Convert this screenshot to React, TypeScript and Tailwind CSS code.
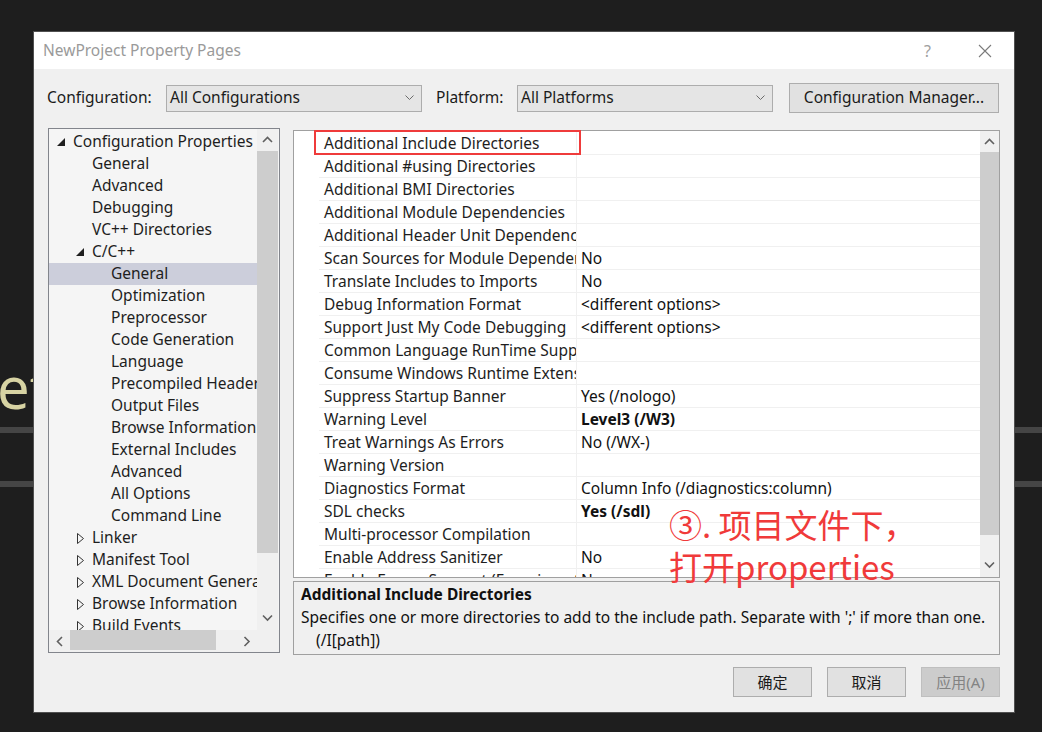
import React from 'react';

type TreeItem = { label: string; level: 0 | 1 | 2; arrow?: 'open' | 'closed'; selected?: boolean };

const tree: TreeItem[] = [
  { label: 'Configuration Properties', level: 0, arrow: 'open' },
  { label: 'General', level: 1 },
  { label: 'Advanced', level: 1 },
  { label: 'Debugging', level: 1 },
  { label: 'VC++ Directories', level: 1 },
  { label: 'C/C++', level: 1, arrow: 'open' },
  { label: 'General', level: 2, selected: true },
  { label: 'Optimization', level: 2 },
  { label: 'Preprocessor', level: 2 },
  { label: 'Code Generation', level: 2 },
  { label: 'Language', level: 2 },
  { label: 'Precompiled Headers', level: 2 },
  { label: 'Output Files', level: 2 },
  { label: 'Browse Information', level: 2 },
  { label: 'External Includes', level: 2 },
  { label: 'Advanced', level: 2 },
  { label: 'All Options', level: 2 },
  { label: 'Command Line', level: 2 },
  { label: 'Linker', level: 1, arrow: 'closed' },
  { label: 'Manifest Tool', level: 1, arrow: 'closed' },
  { label: 'XML Document Generator', level: 1, arrow: 'closed' },
  { label: 'Browse Information', level: 1, arrow: 'closed' },
  { label: 'Build Events', level: 1, arrow: 'closed' },
];

const indent = { 0: 'pl-[8px]', 1: 'pl-[27px]', 2: 'pl-[46px]' };

const props: { name: string; value?: string; bold?: boolean }[] = [
  { name: 'Additional Include Directories' },
  { name: 'Additional #using Directories' },
  { name: 'Additional BMI Directories' },
  { name: 'Additional Module Dependencies' },
  { name: 'Additional Header Unit Dependencies' },
  { name: 'Scan Sources for Module Dependencies', value: 'No' },
  { name: 'Translate Includes to Imports', value: 'No' },
  { name: 'Debug Information Format', value: '<different options>' },
  { name: 'Support Just My Code Debugging', value: '<different options>' },
  { name: 'Common Language RunTime Support' },
  { name: 'Consume Windows Runtime Extension' },
  { name: 'Suppress Startup Banner', value: 'Yes (/nologo)' },
  { name: 'Warning Level', value: 'Level3 (/W3)', bold: true },
  { name: 'Treat Warnings As Errors', value: 'No (/WX-)' },
  { name: 'Warning Version' },
  { name: 'Diagnostics Format', value: 'Column Info (/diagnostics:column)' },
  { name: 'SDL checks', value: 'Yes (/sdl)', bold: true },
  { name: 'Multi-processor Compilation' },
  { name: 'Enable Address Sanitizer', value: 'No' },
  { name: 'Enable Fuzzer Support (Experimental)', value: 'No' },
];

function Chevron({ dir }: { dir: 'up' | 'down' | 'left' | 'right' }) {
  const pts = {
    up: '1,6 5.5,1.5 10,6',
    down: '1,1.5 5.5,6 10,1.5',
    left: '6,1 1.5,5.5 6,10',
    right: '1.5,1 6,5.5 1.5,10',
  }[dir];
  const size = dir === 'up' || dir === 'down' ? { w: 11, h: 8 } : { w: 8, h: 11 };
  return (
    <svg width={size.w} height={size.h} viewBox={`0 0 ${size.w} ${size.h}`}>
      <polyline points={pts} fill="none" stroke="#606060" strokeWidth="1.6" />
    </svg>
  );
}

function Combo({ text }: { text: string }) {
  return (
    <div className="flex h-[27px] w-[256px] items-center justify-between border border-[#adadad] bg-[#e5e5e5] pl-[3px] pr-[7px]">
      <span className="text-[15.5px] text-[#1b1b1b]">{text}</span>
      <svg width="9" height="6" viewBox="0 0 9 6">
        <polyline points="0.5,0.5 4.5,4.5 8.5,0.5" fill="none" stroke="#6b6b6b" strokeWidth="1" />
      </svg>
    </div>
  );
}

function Tree() {
  return (
    <div className="flex h-[525px] w-[232px] flex-col border border-[#82858c] bg-[#f5f5f5]">
      <div className="flex h-[501px]">
        <div className="w-[208px] overflow-hidden pt-[2px]">
          {tree.map((t, i) => (
            <div
              key={i}
              className={`flex h-[22px] items-center whitespace-nowrap ${indent[t.level]} ${t.selected ? 'bg-[#cccedb]' : ''}`}
            >
              <span className="flex w-[16px] shrink-0 items-center">
                {t.arrow === 'open' && (
                  <svg width="8" height="8" viewBox="0 0 8 8">
                    <polygon points="8,0 8,8 0,8" fill="#1e1e1e" />
                  </svg>
                )}
                {t.arrow === 'closed' && (
                  <svg width="8" height="11" viewBox="0 0 8 11" className="ml-[1px]">
                    <polygon points="0.5,0.5 6.5,5.5 0.5,10.5" fill="none" stroke="#333" strokeWidth="1" />
                  </svg>
                )}
              </span>
              <span className="text-[15.5px] text-[#1e1e1e]">{t.label}</span>
            </div>
          ))}
        </div>
        <div className="flex w-[21px] flex-col bg-[#f0f0f0]">
          <div className="flex h-[22px] items-center justify-center">
            <Chevron dir="up" />
          </div>
          <div className="h-[402px] bg-[#cdcdcd]" />
          <div className="flex-1" />
          <div className="flex h-[24px] items-center justify-center">
            <Chevron dir="down" />
          </div>
        </div>
      </div>
      <div className="flex h-[22px] bg-[#f0f0f0]">
        <div className="flex w-[21px] items-center justify-center">
          <Chevron dir="left" />
        </div>
        <div className="h-[20px] w-[146px] bg-[#cdcdcd]" />
        <div className="flex-1" />
        <div className="flex w-[22px] items-center justify-center">
          <Chevron dir="right" />
        </div>
        <div className="w-[21px]" />
      </div>
    </div>
  );
}

function Grid() {
  return (
    <div className="relative flex h-[448px] w-[707px] border border-[#a0a0a0] bg-white">
      <div className="w-[25px] shrink-0" />
      <div className="flex-1 overflow-hidden pt-[1px]">
        {props.map((p, i) => (
          <div key={i} className="flex h-[23px] border-b border-[#f0f0f0]">
            <div className="w-[258px] shrink-0 overflow-hidden whitespace-nowrap border-r border-[#f0f0f0] pl-[5px] text-[15.5px] leading-[22px] text-[#1e1e1e]">
              {p.name}
            </div>
            <div className={`whitespace-nowrap pl-[4px] text-[15.5px] leading-[22px] text-[#111] ${p.bold ? 'font-bold' : ''}`}>
              {p.value}
            </div>
          </div>
        ))}
      </div>
      <div className="flex w-[19px] shrink-0 flex-col bg-[#f0f0f0]">
        <div className="flex h-[21px] items-center justify-center">
          <Chevron dir="up" />
        </div>
        <div className="h-[383px] bg-[#cdcdcd]" />
        <div className="flex-1" />
        <div className="flex h-[24px] items-center justify-center">
          <Chevron dir="down" />
        </div>
      </div>
      <div className="pointer-events-none absolute left-[20px] top-[-1px] h-[25px] w-[267px] border-2 border-[#ef3b3b]" />
    </div>
  );
}

export default function App() {
  return (
    <div className="relative h-[732px] w-[1042px] overflow-hidden bg-[#1e1e1e] pl-[33px] pt-[31px] font-['Noto_Sans','Noto_Sans_CJK_SC',sans-serif]">
      {/* editor behind the dialog */}
      <div className="absolute left-[-3px] top-[352px] text-[58px] leading-[70px] text-[#d7d3a3]">et</div>
      <div className="absolute left-0 top-[427px] h-[6px] w-full bg-[#454545]" />
      <div className="absolute left-0 top-[481px] h-[6px] w-full bg-[#454545]" />

      <div className="relative flex h-[682px] w-[982px] flex-col border border-[#505050] bg-[#f0f0f0]">
        <div className="flex h-[37px] items-center bg-white pl-[9px] pr-[22px]">
          <span className="text-[15.5px] text-[#9a9a9a]">NewProject Property Pages</span>
          <span className="ml-auto text-[16px] text-[#a0a0a0]">?</span>
          <svg width="14" height="14" viewBox="0 0 14 14" className="ml-[47px]">
            <path d="M1 1 L13 13 M13 1 L1 13" stroke="#7a7a7a" strokeWidth="1.1" />
          </svg>
        </div>

        <div className="flex items-center pl-[13px] pt-[14px]">
          <span className="w-[119px] text-[15.5px] text-[#1b1b1b]">Configuration:</span>
          <Combo text="All Configurations" />
          <span className="ml-[14px] w-[81px] text-[15.5px] text-[#1b1b1b]">Platform:</span>
          <Combo text="All Platforms" />
          <button className="ml-[16px] h-[30px] w-[210px] border border-[#adadad] bg-[#e1e1e1] text-[15.5px] text-[#1b1b1b]">
            Configuration Manager...
          </button>
        </div>

        <div className="flex pl-[14px] pt-[15px]">
          <Tree />
          <div className="ml-[13px] mt-[2px] flex flex-col">
            <Grid />
            <div className="mt-[3px] h-[74px] w-[707px] border border-[#a0a0a0] pl-[7px] pt-[1px]">
              <div className="text-[15.5px] font-bold leading-[23px] text-[#111]">Additional Include Directories</div>
              <div className="whitespace-nowrap text-[15.5px] leading-[23px] text-[#111]">
                Specifies one or more directories to add to the include path. Separate with ';' if more than one.
              </div>
              <div className="pl-[15px] text-[15.5px] leading-[23px] text-[#111]">(/I[path])</div>
            </div>
          </div>
        </div>

        <div className="mt-[12px] flex justify-end gap-[15px] pr-[14px]">
          <button className="h-[30px] w-[79px] border border-[#adadad] bg-[#e1e1e1] text-[15px] text-[#1b1b1b]">确定</button>
          <button className="h-[30px] w-[79px] border border-[#adadad] bg-[#e1e1e1] text-[15px] text-[#1b1b1b]">取消</button>
          <button className="h-[30px] w-[79px] border border-[#bfbfbf] bg-[#cccccc] text-[15px] text-[#838383]">应用(A)</button>
        </div>

        <div className="pointer-events-none absolute left-[635px] top-[471px] font-['Noto_Sans_CJK_SC',sans-serif] text-[33px] leading-[42px] text-[#f03a3a]">
          <div>③. 项目文件下，</div>
          <div>打开properties</div>
        </div>
      </div>
    </div>
  );
}
